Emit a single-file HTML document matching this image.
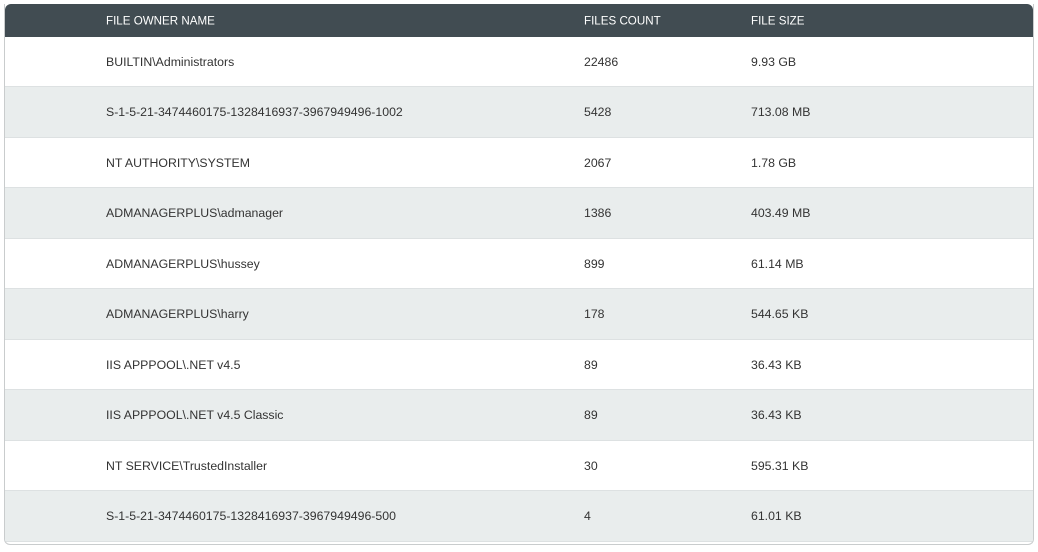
<!DOCTYPE html>
<html><head><style>
body{margin:0;background:#fff;width:1038px;height:552px;overflow:hidden;font-family:"Liberation Sans",sans-serif;}
.t{position:absolute;left:4px;top:4px;width:1030px;height:541px;border:1px solid #c9cccd;border-top:none;border-radius:0 0 6px 6px;overflow:hidden;box-sizing:border-box;}
.h{height:33px;background:#414c52;color:#fff;font-size:11.6px;position:relative;border-radius:6px 6px 0 0;}
.r{position:relative;font-size:12.3px;color:#333;border-bottom:1px solid #dde1e2;box-sizing:border-box;}
.r.a{background:#e9eded;}
.c{position:absolute;top:50%;transform:translateY(-50%);white-space:nowrap;}
.c1{left:101px}.c2{left:579px}.c3{left:746px}
</style></head><body>
<div class="t">
<div class="h"><span class="c c1">FILE OWNER NAME</span><span class="c c2">FILES COUNT</span><span class="c c3">FILE SIZE</span></div>
<div class="r" style="height:50px"><span class="c c1">BUILTIN\Administrators</span><span class="c c2">22486</span><span class="c c3">9.93 GB</span></div>
<div class="r a" style="height:51px"><span class="c c1">S-1-5-21-3474460175-1328416937-3967949496-1002</span><span class="c c2">5428</span><span class="c c3">713.08 MB</span></div>
<div class="r" style="height:50px"><span class="c c1">NT AUTHORITY\SYSTEM</span><span class="c c2">2067</span><span class="c c3">1.78 GB</span></div>
<div class="r a" style="height:51px"><span class="c c1">ADMANAGERPLUS\admanager</span><span class="c c2">1386</span><span class="c c3">403.49 MB</span></div>
<div class="r" style="height:50px"><span class="c c1">ADMANAGERPLUS\hussey</span><span class="c c2">899</span><span class="c c3">61.14 MB</span></div>
<div class="r a" style="height:51px"><span class="c c1">ADMANAGERPLUS\harry</span><span class="c c2">178</span><span class="c c3">544.65 KB</span></div>
<div class="r" style="height:50px"><span class="c c1">IIS APPPOOL\.NET v4.5</span><span class="c c2">89</span><span class="c c3">36.43 KB</span></div>
<div class="r a" style="height:51px"><span class="c c1">IIS APPPOOL\.NET v4.5 Classic</span><span class="c c2">89</span><span class="c c3">36.43 KB</span></div>
<div class="r" style="height:50px"><span class="c c1">NT SERVICE\TrustedInstaller</span><span class="c c2">30</span><span class="c c3">595.31 KB</span></div>
<div class="r a" style="height:51px"><span class="c c1">S-1-5-21-3474460175-1328416937-3967949496-500</span><span class="c c2">4</span><span class="c c3">61.01 KB</span></div>
</div>
</body></html>
